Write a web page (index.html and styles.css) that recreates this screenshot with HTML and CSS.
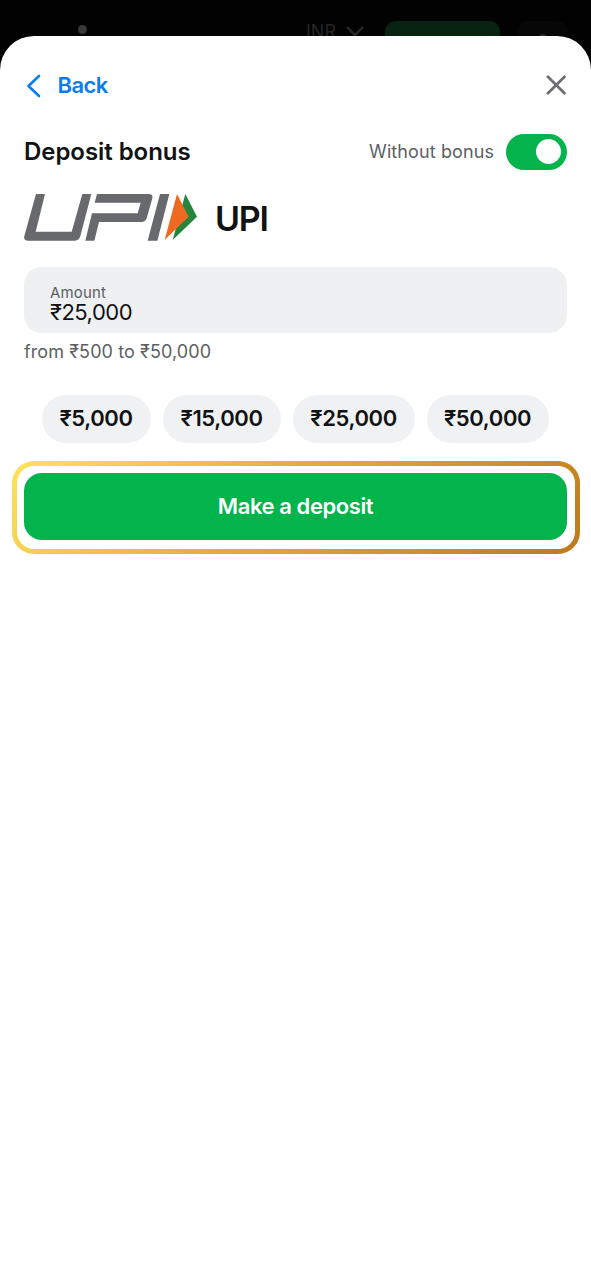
FILE: index.html
```html
<!DOCTYPE html>
<html lang="en">
<head>
<meta charset="utf-8">
<title>Deposit</title>
<link rel="stylesheet" href="styles.css">
</head>
<body>
<header class="topbar">
  <span class="dot"></span>
  <span class="currency">INR</span>
  <svg class="caret" width="18" height="12" viewBox="0 0 18 12"><path d="M1 1l8 8 8-8" fill="none" stroke="#2b2b2b" stroke-width="2.4"/></svg>
  <span class="top-action"></span>
  <span class="profile"><svg width="10" height="10" viewBox="0 0 10 10"><circle cx="5" cy="5" r="4" fill="#292929"/></svg></span>
</header>
<main class="sheet">
  <nav class="sheet-nav">
    <a class="back">
      <svg class="chevron" width="16" height="24" viewBox="0 0 16 24"><path d="M13 2L2.5 12 13 22" fill="none" stroke="#0a7cf2" stroke-width="2.6" stroke-linecap="round" stroke-linejoin="round"/></svg>
      <span class="back-label">Back</span>
    </a>
    <svg class="close" width="20" height="20" viewBox="0 0 20 20"><path d="M1.9 1.7l16.6 16.6M18.5 1.7L1.9 18.3" fill="none" stroke="#6c7074" stroke-width="2.7" stroke-linecap="round"/></svg>
  </nav>
  <section class="bonus">
    <h1 class="title">Deposit bonus</h1>
    <span class="bonus-label">Without bonus</span>
    <span class="switch"><span class="knob"></span></span>
  </section>
  <section class="method">
    <svg class="logo" width="173" height="47" viewBox="0 0 519 141">
      <g fill="#67696c">
        <path d="M36 0H63L35 113H143L175 0H202L169 126Q165 140 153 140H12Q-2 140 1 126Z"/>
        <path d="M219 0H373Q388 0 385 13L368 73Q364 84 352 84H225L211 140H184L204 58H341L350 26H212Z"/>
        <path d="M408 0H436L400 140H371Z"/>
      </g>
      <path d="M484 0L519 68L446 138Z" fill="#24853d"/>
      <path d="M459 0L494 68L422 138Z" fill="#ed6a20"/>
    </svg>
    <span class="method-name">UPI</span>
  </section>
  <section class="field">
    <span class="field-label">Amount</span>
    <span class="field-value">₹25,000</span>
  </section>
  <p class="limits">from ₹500 to ₹50,000</p>
  <section class="presets">
    <span class="preset preset-s">₹5,000</span>
    <span class="preset preset-m">₹15,000</span>
    <span class="preset preset-l">₹25,000</span>
    <span class="preset preset-l">₹50,000</span>
  </section>
  <div class="frame"><div class="submit">Make a deposit</div></div>
</main>
</body>
</html>
```
FILE: styles.css
```css
* { box-sizing: border-box; }
body { margin: 0; background: #020202; font-family: Inter, "Liberation Sans", sans-serif; color: #111214; }
svg { display: block; flex: none; }
.topbar { display: flex; align-items: flex-start; height: 36px; }
.dot { width: 9px; height: 9px; margin: 25px 0 0 78px; border-radius: 50%; background: #383838; flex: none; }
.currency { width: 32px; margin: 21px 0 0 219px; font-size: 18px; line-height: 22px; color: #252525; flex: none; }
.caret { margin: 26px 0 0 8px; }
.top-action { width: 115px; height: 40px; margin: 21px 0 0 21px; border-radius: 11px; background: #082410; flex: none; }
.profile { display: flex; justify-content: center; width: 51px; height: 40px; margin: 21px 0 0 17px; padding-top: 12px; border-radius: 11px; background: #070707; flex: none; }
.sheet { position: relative; height: 1244px; padding: 36px 24px 0; border-radius: 34px 34px 0 0; background: #fff; }
.sheet-nav { display: flex; align-items: center; justify-content: space-between; height: 26px; }
.back { display: flex; align-items: center; gap: 15.5px; padding-left: 2px; color: #0a7cf2; }
.chevron { margin-top: 2px; }
.back-label { font-size: 22px; line-height: 26px; font-weight: 600; letter-spacing: -0.6px; }
.close { margin-right: 1px; }
.bonus { display: flex; align-items: center; height: 37px; margin-top: 35px; }
.title { flex: 1; margin: 0; font-size: 24px; line-height: 30px; font-weight: 600; letter-spacing: -0.05px; }
.bonus-label { font-size: 18px; letter-spacing: 0.1px; color: #5c5f63; }
.switch { display: flex; align-items: center; justify-content: flex-end; width: 61px; height: 36px; margin-left: 12px; padding-right: 6px; border-radius: 18px; background: #03b34b; }
.knob { width: 25px; height: 25px; border-radius: 50%; background: #fff; }
.method { display: flex; align-items: center; gap: 18px; height: 47px; margin-top: 24px; }
.method-name { padding-top: 2px; font-size: 34px; line-height: 40px; font-weight: 600; letter-spacing: -1.2px; }
.field { display: flex; flex-direction: column; height: 66px; margin-top: 26px; padding: 18px 26px 0; border-radius: 18px; background: #eff0f2; }
.field-label { font-size: 15px; line-height: 16px; letter-spacing: 0.15px; color: #5c5f63; }
.field-value { font-size: 22px; line-height: 22px; letter-spacing: -0.5px; }
.limits { margin: 7px 0 0; font-size: 18px; line-height: 24px; letter-spacing: 0.1px; color: #5c5f63; }
.presets { display: flex; justify-content: center; gap: 12px; height: 48px; margin: 30.5px 1px 0 0; }
.preset { display: flex; align-items: center; justify-content: center; padding-bottom: 1px; border-radius: 24px; background: #f0f1f3; font-size: 22px; font-weight: 600; letter-spacing: -0.4px; }
.preset-s { width: 109px; }
.preset-m { width: 118px; }
.preset-l { width: 122px; }
.frame { height: 93px; margin: 18.5px -13px 0 -12px; padding: 7px 8px 9px 7px; border: 5px solid transparent; border-radius: 22px; background: linear-gradient(#fff, #fff) padding-box, linear-gradient(135deg, #ffe35c, #e0af39 45%, #bd791a) border-box; }
.submit { display: flex; align-items: center; justify-content: center; height: 67px; border-radius: 18px; background: #03b34b; color: #fff; font-size: 22px; font-weight: 600; letter-spacing: -0.42px; padding-bottom: 1px; }
```
